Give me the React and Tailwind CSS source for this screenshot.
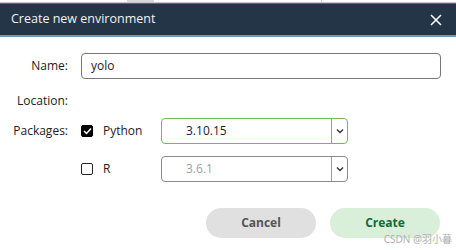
import { useState } from "react";

const font = { fontFamily: '"Open Sans", "Noto Sans", sans-serif' };

const Chevron = () => (
  <svg width="8" height="6" viewBox="0 0 8 6" className="text-[#333]">
    <path d="M1 1.5 L4 4.5 L7 1.5" fill="none" stroke="currentColor" strokeWidth="1.4" />
  </svg>
);

const Select = ({ value, active }) => (
  <div
    className={
      active
        ? "flex h-[26px] w-[187px] items-center rounded-[4px] border border-[#6cbf4e]"
        : "flex h-[26px] w-[187px] items-center rounded-[4px] border border-[#8a8a8a]"
    }
  >
    <span className={active ? "flex-1 pl-[24px] text-[12px] text-[#222]" : "flex-1 pl-[24px] text-[12px] text-[#a0a0a0]"}>
      {value}
    </span>
    <div className="flex h-full w-[16px] items-center justify-center border-l border-[#9a9a9a]">
      <Chevron />
    </div>
  </div>
);

export default function App() {
  const [python, setPython] = useState(true);
  const [r, setR] = useState(false);

  return (
    <div className="relative h-[250px] w-[456px] overflow-hidden bg-white" style={font}>
      {/* strip of the window behind */}
      <div className="flex h-[3px] border-b border-[#c9c9c9]">
        <div className="w-[127px]" />
        <div className="w-[27px] bg-[#d8d8d8]" />
        <div className="w-[167px]" />
        <div className="w-px bg-[#d0d0d0]" />
      </div>

      <div className="flex h-[34px] items-center justify-between border-t border-[#4d6b80] border-b-2 border-b-[#6a9cb6] bg-[#243547] pl-[11px] pr-[14px]">
        <span className="text-[12.5px] text-[#f0f2f4]">Create new environment</span>
        <svg width="12" height="12" viewBox="0 0 12 12">
          <path d="M1 1 L11 11 M11 1 L1 11" stroke="white" strokeWidth="1.5" />
        </svg>
      </div>

      <div className="mt-[16px] grid grid-cols-[68px_1fr] items-center gap-x-[13px] text-[12px] text-[#222]">
        <span className="text-right">Name:</span>
        <div className="mr-[15px] flex h-[26px] items-center rounded-[4px] border border-[#777] pl-[9px]">
          yolo
        </div>

        <span className="mt-[9px] h-[26px] pt-[4px] text-right">Location:</span>
        <div />

        <span className="pt-[4px] text-right">Packages:</span>
        <div className="flex items-center pt-[4px]">
          <button
            onClick={() => setPython(!python)}
            className="flex h-[12px] w-[12px] items-center justify-center rounded-[2px] border border-black bg-black"
          >
            {python && (
              <svg width="9" height="8" viewBox="0 0 9 8">
                <path d="M1 4 L3.5 6.5 L8 1.5" fill="none" stroke="white" strokeWidth="1.5" />
              </svg>
            )}
          </button>
          <span className="ml-[10px] w-[58px]">Python</span>
          <Select value="3.10.15" active />
        </div>

        <span className="h-[26px]" />
        <div className="mt-[12px] flex items-center">
          <button
            onClick={() => setR(!r)}
            className="h-[12px] w-[12px] rounded-[2px] border-[1.5px] border-[#222] bg-white"
          />
          <span className="ml-[10px] w-[58px]">R</span>
          <Select value="3.6.1" />
        </div>
      </div>

      <div className="mt-[26px] flex justify-end gap-[14px] pr-[16px]">
        <button className="h-[30px] w-[110px] rounded-full bg-[#e0e0e0] text-[12px] font-bold text-[#555]">
          Cancel
        </button>
        <button className="h-[30px] w-[110px] rounded-full bg-[#d9efd9] text-[12px] font-bold text-[#0f6b3a]">
          Create
        </button>
      </div>

      <span
        className="absolute right-[4px] bottom-[3px] text-[10px] text-[#b0b0b0]"
        style={{ fontFamily: '"Noto Sans", "Noto Sans CJK SC", sans-serif' }}
      >
        CSDN @羽小暮
      </span>
    </div>
  );
}
